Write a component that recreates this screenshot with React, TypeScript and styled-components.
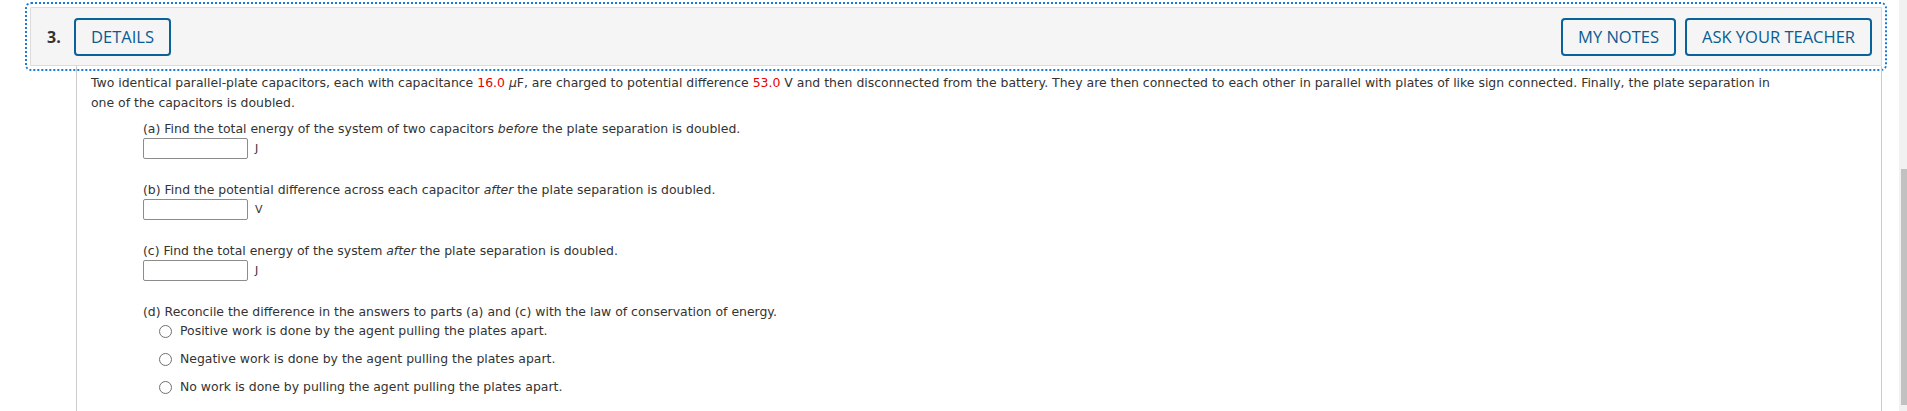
import React from "react";
import styled, { createGlobalStyle } from "styled-components";

const GlobalStyle = createGlobalStyle`
  body {
    margin: 0;
    padding: 0;
    background-color: #ffffff;
    color: #333333;
    font-family: "DejaVu Sans", Verdana, sans-serif;
  }
`;

const Shell = styled.div`
  display: flex;
  height: 411px;
  overflow: hidden;
`;

const Page = styled.div`
  flex: 1;
  padding: 7px 17px 0 30px;
  display: flex;
  flex-direction: column;
`;

const Header = styled.div`
  flex-shrink: 0;
  display: flex;
  align-items: center;
  height: 57px;
  padding: 0 9px 0 16px;
  background-color: #f5f5f5;
  border: 1px solid #dcdcdc;
  outline: 2px dotted #1a7bd6;
  outline-offset: 3px;
  border-radius: 1px;
`;

const Number = styled.span`
  font-family: "Open Sans", "Liberation Sans", sans-serif;
  font-weight: 700;
  font-size: 16px;
  color: #333333;
  width: 12px;
  margin-right: 15px;
`;

const Spacer = styled.div`
  flex: 1;
`;

const HeaderButton = styled.button<{ $gap?: number }>`
  height: 38px;
  padding: 0 15px;
  margin-left: ${(p) => p.$gap ?? 0}px;
  border: 2px solid #0a629a;
  border-radius: 4px;
  background: transparent;
  color: #0a5c92;
  font-family: "Open Sans", "Liberation Sans", sans-serif;
  font-size: 16.5px;
  font-weight: 400;
  cursor: pointer;
`;

const Panel = styled.div`
  flex: 1;
  min-height: 0;
  overflow: hidden;
  margin-left: 46px;
  border-left: 1px solid #cccccc;
  border-right: 1px solid #cccccc;
  padding: 7px 95px 0 14px;
  font-size: 12.45px;
  line-height: 20px;
`;

const Intro = styled.div`
  margin-bottom: 6px;
`;

const Red = styled.span`
  color: #e60000;
`;

const Part = styled.div`
  padding-left: 52px;
  margin-bottom: 21px;
`;

const Prompt = styled.div`
  line-height: 19px;
`;

const AnswerRow = styled.div`
  display: flex;
  align-items: center;
  gap: 7px;
`;

const AnswerBox = styled.div`
  width: 105px;
  height: 21px;
  box-sizing: border-box;
  border: 1px solid #8c8c8c;
  border-radius: 2px;
  background: #ffffff;
`;

const Unit = styled.span`
  font-size: 11px;
`;

const Choices = styled.div`
  display: flex;
  flex-direction: column;
  gap: 8px;
  padding-left: 16px;
`;

const Choice = styled.label`
  display: flex;
  align-items: center;
  gap: 8px;
  height: 20px;
`;

const Radio = styled.span`
  width: 13px;
  height: 13px;
  box-sizing: border-box;
  border: 1px solid #6f6f6f;
  border-radius: 50%;
  background: #ffffff;
`;

const ScrollTrack = styled.div`
  width: 8px;
  background-color: #f1f1f1;
  display: flex;
  justify-content: flex-end;
`;

const ScrollThumb = styled.div`
  width: 6px;
  height: 236px;
  margin-top: 169px;
  background-color: #c1c1c1;
`;

const parts = [
  {
    key: "a",
    text: (
      <>
        (a) Find the total energy of the system of two capacitors <i>before</i> the plate separation is doubled.
      </>
    ),
    unit: "J",
  },
  {
    key: "b",
    text: (
      <>
        (b) Find the potential difference across each capacitor <i>after</i> the plate separation is doubled.
      </>
    ),
    unit: "V",
  },
  {
    key: "c",
    text: (
      <>
        (c) Find the total energy of the system <i>after</i> the plate separation is doubled.
      </>
    ),
    unit: "J",
  },
];

const choices = [
  "Positive work is done by the agent pulling the plates apart.",
  "Negative work is done by the agent pulling the plates apart.",
  "No work is done by pulling the agent pulling the plates apart.",
];

const App = () => {
  return (
    <>
      <GlobalStyle />
      <Shell>
        <Page>
          <Header>
            <Number>3.</Number>
            <HeaderButton>DETAILS</HeaderButton>
            <Spacer />
            <HeaderButton>MY NOTES</HeaderButton>
            <HeaderButton $gap={9}>ASK YOUR TEACHER</HeaderButton>
          </Header>
          <Panel>
            <Intro>
              Two identical parallel-plate capacitors, each with capacitance <Red>16.0</Red> <i>μ</i>F, are charged to
              potential difference <Red>53.0</Red> V and then disconnected from the battery. They are then connected to
              each other in parallel with plates of like sign connected. Finally, the plate separation in one of the
              capacitors is doubled.
            </Intro>
            {parts.map((p) => (
              <Part key={p.key}>
                <Prompt>{p.text}</Prompt>
                <AnswerRow>
                  <AnswerBox />
                  <Unit>{p.unit}</Unit>
                </AnswerRow>
              </Part>
            ))}
            <Part>
              <Prompt>(d) Reconcile the difference in the answers to parts (a) and (c) with the law of conservation of energy.</Prompt>
              <Choices>
                {choices.map((c) => (
                  <Choice key={c}>
                    <Radio />
                    {c}
                  </Choice>
                ))}
              </Choices>
            </Part>
          </Panel>
        </Page>
        <ScrollTrack>
          <ScrollThumb />
        </ScrollTrack>
      </Shell>
    </>
  );
};

export default App;
